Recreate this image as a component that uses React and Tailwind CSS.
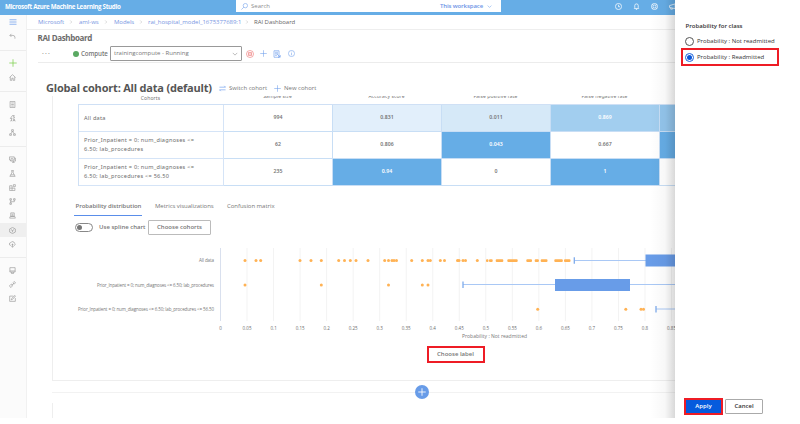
import React from 'react';

const ICONS = {
  menu: <path d="M1 3.5h14M1 8h14M1 12.5h14" />,
  undo: <path d="M5.5 2L2 5.500l3.500 3.500M2 5.500h7a4.500 4.500 0 0 1 4.500 4.500v3" />,
  plus: <path d="M8 .5v15M.5 8h15" />,
  home: <path d="M1 8l7-6.500L15 8M3 7v7.500h3.500v-5h3v5H13V7" />,
  list: <path d="M2.500 1h11v14h-11zM5 4.500h6M5 8h6M5 11.500h6" />,
  automl: <path d="M8 1L3 8h4l-3 6 3-2M8 1h4l-2 4h3l-3 3M9 14.500l2.500-6 2.500 6M10 12.500h3" />,
  designer: <path d="M6 1.500h4v4H6zM8 5.500L4 11M8 5.500l4 5.500M1.500 11h4v3.500h-4zM10.500 11h4v3.500h-4z" />,
  data: <path d="M1 2h11v7H1zM3.500 9v2.500H15V5h-3M10 11.500v3M4 5.500h5M7 14.500h6" />,
  flask: <path d="M5 1.500h6M6.500 1.500v5L2 14.500h12L9.500 6.500v-5M4 11h8" />,
  blocks: <path d="M1.500 4h5.500v11H1.500zM7 9.500h6.500V15H7M1.500 9.500H7M10 1.500h4.500V6H10z" />,
  branch: <path d="M2 1.500h3.500V5H2zM10.500 1.500H14V5h-3.500zM2 11h3.500v3.500H2zM3.800 5v6M12.200 5v3.500H3.800" />,
  env: <path d="M4 2h8v8H4zM1.500 14h13l-1.500-4H3zM6 5h4M6 7.500h4" />,
  box: <path d="M8 1l6.500 3.500v7L8 15l-6.500-3.500v-7zM4.500 6L8 8l3.500-2M8 8v4" />,
  cloud: <path d="M5 10H3.500a3 3 0 0 1 .5-6 4.500 4.500 0 0 1 8.500 1 2.700 2.700 0 0 1 0 5H11M8 6v8M5.500 12L8 14.500l2.500-2.500M6 8h4" />,
  monitor: <path d="M2 1.500h12v10H2zM5 14.500h6M6 11.500v3M10 11.500v3M2 9h12" />,
  link: <path d="M6 10l6-6M9 4l3-3 3 3-3 3-2.500-.5M7 7L4 8l-3 3 3 4 3-3 1-3" />,
  edit: <path d="M14.500 7v7.500h-13v-12H10M5 11l1-3 7.500-7 1.500 1.500L8 10z" />,
  swap: <path d="M1 5h14l-3-3M15 11H1l3 3" />,
  clock: <path d="M8 1a7 7 0 1 1 0 14A7 7 0 0 1 8 1zM8 4v4.500h3.500" />,
  bell: <path d="M3 12.500h10l-1-2V6a4 4 0 0 0-8 0v4.500zM6.500 15h3" />,
  gear: <path d="M8 1a7 7 0 1 1 0 14A7 7 0 0 1 8 1zM8 4.500a3.500 3.500 0 1 1 0 7 3.500 3.500 0 0 1 0-7zM3 3l2 2M13 3l-2 2M3 13l2-2M13 13l-2-2" />,
  horn: <path d="M1 6l13-4v11L1 10zM4 11v3h4v-2" />,
  search: <path d="M10 1a5 5 0 1 1 0 10 5 5 0 0 1 0-10zM6.500 9.500L1 15" />,
  down: <path d="M2 5l6 6 6-6" />,
  right: <path d="M5 2l6 6-6 6" />,
  stop: <path d="M8 1a7 7 0 1 1 0 14A7 7 0 0 1 8 1zM5 5h6v6H5zM5 8h6" />,
  script: <path d="M2 1.500h10v13H2zM4 4.500h6M4 7.500h6M4 10.500h4M8 8l6 6M14.500 10v4.500H10" />,
  info: <path d="M8 1a7 7 0 1 1 0 14A7 7 0 0 1 8 1zM8 7v5M8 4v1.500" />,
};

function Icon({ name, size = 7, stroke = 1.7, className = '' }) {
  return (
    <svg
      width={size}
      height={size}
      viewBox="0 0 16 16"
      fill="none"
      stroke="currentColor"
      strokeWidth={stroke}
      className={'shrink-0 ' + className}
    >
      {ICONS[name]}
    </svg>
  );
}

function NavItem({ name, color = 'text-[#999999]', active = false, size = 7 }) {
  return (
    <div className={'flex h-[14.200px] w-full shrink-0 items-center pl-[8.500px] ' + color + (active ? ' bg-[#efefef]' : '')}>
      <Icon name={name} size={size} stroke={1.500} />
    </div>
  );
}

function Sidebar() {
  return (
    <nav className="flex w-[27px] shrink-0 flex-col border-r border-[#f1f1f1] bg-[#fbfbfb]">
      <div className="h-[36px] border-b border-[#ececec]">
        <NavItem name="menu" color="text-[#6f9fec]" size={8} />
        <NavItem name="undo" />
      </div>
      <div className="h-[41px] border-b border-[#ececec] pt-[5px]">
        <NavItem name="plus" color="text-[#7fd04f]" size={8} />
        <NavItem name="home" />
      </div>
      <div className="h-[55px] border-b border-[#ececec] pt-[5px]">
        <NavItem name="list" />
        <NavItem name="automl" />
        <NavItem name="designer" />
      </div>
      <div className="h-[111px] border-b border-[#ececec] pt-[5px]">
        <NavItem name="data" />
        <NavItem name="flask" />
        <NavItem name="blocks" />
        <NavItem name="branch" />
        <NavItem name="env" />
        <NavItem name="box" active />
        <NavItem name="cloud" />
      </div>
      <div className="pt-[5px]">
        <NavItem name="monitor" />
        <NavItem name="link" />
        <NavItem name="edit" />
      </div>
    </nav>
  );
}

function Header() {
  return (
    <header className="flex h-[15px] shrink-0 items-start bg-[#66ade6] text-white">
      <div className="w-[236px] pl-[5px] text-[6.200px] leading-[13px] font-bold tracking-[-0.300px] whitespace-nowrap">
        Microsoft Azure Machine Learning Studio
      </div>
      <div className="flex h-[12px] w-[265px] items-center bg-white text-[6px]">
        <Icon name="search" className="ml-[5px] text-[#6f9fec]" stroke={1.300} />
        <span className="ml-[3px] text-[#8c8c8c]">Search</span>
        <span className="ml-auto font-semibold tracking-[-0.100px] text-[#6c93e6]">This workspace</span>
        <Icon name="down" size={5} className="mr-[9px] ml-[4px] text-[#6f9fec]" />
      </div>
      <div className="ml-[114px] flex h-[12px] items-center gap-[11px]">
        <Icon name="clock" />
        <Icon name="bell" />
        <Icon name="gear" />
        <Icon name="horn" />
      </div>
    </header>
  );
}

function Breadcrumb() {
  return (
    <div className="flex h-[15px] items-center border-b border-[#eeeeee] pl-[11px] text-[6px] tracking-[-0.040px] whitespace-nowrap text-[#7896e2]">
      <span className="w-[31px]">Microsoft</span>
      <Icon name="right" size={4} className="text-[#aaaaaa]" />
      <span className="ml-[6px] w-[25px]">aml-ws</span>
      <Icon name="right" size={4} className="text-[#aaaaaa]" />
      <span className="ml-[6px] w-[25px]">Models</span>
      <Icon name="right" size={4} className="text-[#aaaaaa]" />
      <span className="ml-[5px] w-[97px]">rai_hospital_model_1675377689:1</span>
      <Icon name="right" size={4} className="text-[#aaaaaa]" />
      <span className="ml-[5px] text-[#666666]">RAI Dashboard</span>
    </div>
  );
}

const ROWS = [
  {
    label: ['All data'],
    cells: [
      ['994', 'bg-white'],
      ['0.831', 'bg-[#e2effb]'],
      ['0.011', 'bg-[#d6e9f8]'],
      ['0.869', 'bg-[#a2ceef] text-white'],
      ['', 'bg-[#93c5ec]'],
    ],
  },
  {
    label: ['Prior_Inpatient = 0; num_diagnoses <=', '6.50; lab_procedures'],
    cells: [
      ['62', 'bg-white'],
      ['0.806', 'bg-white'],
      ['0.043', 'bg-[#66ade6] text-white'],
      ['0.667', 'bg-white'],
      ['', 'bg-[#66ade6]'],
    ],
  },
  {
    label: ['Prior_Inpatient = 0; num_diagnoses <=', '6.50; lab_procedures <= 56.50'],
    cells: [
      ['235', 'bg-white'],
      ['0.94', 'bg-[#66ade6] text-white'],
      ['0', 'bg-white'],
      ['1', 'bg-[#66ade6] text-white'],
      ['', 'bg-white'],
    ],
  },
];

function MetricsTable() {
  return (
    <div className="ml-[25px] w-[691px] font-['Noto_Sans',sans-serif]">
      <div className="grid h-[8px] grid-cols-[145px_109px_109px_109px_109px_109px] text-center text-[5px] leading-[6px] tracking-[0.100px] text-[#777777]">
        <span className="-mt-[1px]">Cohorts</span>
        <span className="-mt-[3px]">Sample size</span>
        <span className="-mt-[3px]">Accuracy score</span>
        <span className="-mt-[3px]">False positive rate</span>
        <span className="-mt-[3px]">False negative rate</span>
      </div>
      <div className="border-t border-l border-[#cfe0f5]">
        {ROWS.map((row, i) => (
          <div key={i} className="grid h-[27px] grid-cols-[145px_109px_109px_109px_109px_109px]">
            <div className="flex flex-col justify-center border-r border-b border-[#d5e4f7] pl-[5px] text-[5.600px] leading-[9px] tracking-[0.250px] whitespace-nowrap text-[#6c6c6c]">
              {row.label.map((line) => (
                <span key={line}>{line}</span>
              ))}
            </div>
            {row.cells.map(([value, tone], j) => (
              <div
                key={j}
                className={
                  'flex items-center justify-center border-r border-b border-[#c8def5] text-[5.200px] font-semibold ' +
                  tone +
                  (tone.includes('text-white') ? '' : ' text-[#777777]')
                }
              >
                {value}
              </div>
            ))}
          </div>
        ))}
      </div>
    </div>
  );
}

const OUTLIERS = [
  [
    260.500,
    [
      245, 256, 260.700, 300, 311, 321.300, 338.700, 344.500, 350.300, 356, 368, 384.700, 388.500, 392, 394, 396.500,
      411.700, 422.300, 428, 430.300, 440.300, 444.500, 457.500, 459, 463, 465.500, 477.300,
    ],
  ],
  [285, [245, 321.300, 388.500, 422.300, 428]],
  [309.300, [537.700, 625.800, 641, 643.500]],
];

const CLUSTERS = [
  [486, 488.500], [489, 492.700], [495.700, 503.300], [507.300, 517.700],
  [526.300, 532], [534.700, 538.900], [540.700, 547.500], [554.300, 562.800], [564, 570.500],
];

const TICKS = Array.from({ length: 18 }, (_, i) => i);

function BoxPlot() {
  return (
    <svg width="622" height="100" viewBox="53 242 622 100" className="block overflow-visible font-['Open_Sans',sans-serif]">
      {TICKS.map((i) => (
        <g key={i}>
          <path d={`M${220.500 + i * 26.530} 248V321`} stroke={i ? '#f3f3f3' : '#d9e0ee'} />
          <text x={220.500 + i * 26.530} y="329.500" fontSize="4.500" textAnchor="middle" fill="#6c6c6c">
            {Number((i * 0.05).toFixed(2))}
          </text>
        </g>
      ))}
      <g fontSize="4.500" textAnchor="end" fill="#777777">
        <text x="214" y="262.300" textLength="15">All data</text>
        <text x="214" y="286.500" textLength="117">Prior_Inpatient = 0; num_diagnoses &lt;= 6.50; lab_procedures</text>
        <text x="214" y="310.800" textLength="136">Prior_Inpatient = 0; num_diagnoses &lt;= 6.50; lab_procedures &lt;= 56.50</text>
      </g>
      <text x="494.500" y="338.300" fontSize="5" textAnchor="middle" textLength="65" fill="#777777">Probability : Not readmitted</text>
      <g stroke="#a9c8f5" fill="none">
        <path d="M574.300 260.500H675M463 284.500H675M656 309H675" />
        <path d="M574.300 257.300v6.500M463 281.500v6.500M656 306v6.500" stroke="#7eabec" strokeWidth="1.300" />
      </g>
      <path d="M645.500 254.500H675v12H645.500zM555 279h75v12h-75z" fill="#689ce8" />
      <g fill="#ffb254">
        {OUTLIERS.map(([y, xs]) => xs.map((x, i) => <circle key={y + '-' + i} cx={x} cy={y} r="1.500" />))}
        {CLUSTERS.map(([a, b]) => (
          <rect key={a} x={a} y="259.200" width={b - a} height="2.700" rx="1" />
        ))}
      </g>
    </svg>
  );
}

function SidePanel() {
  return (
    <aside className="absolute inset-y-0 right-0 flex w-[125px] flex-col bg-white text-[6px] text-[#333333]">
      <div className="mt-[21px] ml-[10.500px] h-[10px] text-[6px] leading-[10px] font-semibold">Probability for class</div>
      <label className="mt-[5px] ml-[10px] flex h-[11px] items-center gap-[3px]">
        <span className="size-[9px] rounded-full border border-[#555555]" />
        <span className="whitespace-nowrap">Probability : Not readmitted</span>
      </label>
      <label className="mt-px ml-[6px] flex h-[18px] w-[98px] items-center gap-[3px] border-2 border-[#ee1c25] pl-[2px]">
        <span className="flex size-[9px] items-center justify-center rounded-full border border-[#1a62dc]">
          <span className="size-[5px] rounded-full bg-[#0b57d8]" />
        </span>
        <span className="whitespace-nowrap">Probability : Readmitted</span>
      </label>
      <div className="mt-auto mb-[9px] ml-[9px] flex h-[17px] items-center gap-[2px] font-semibold">
        <button className="h-[17px] w-[39px] border-2 border-[#ee1c25] bg-[#055bdd] text-white">Apply</button>
        <button className="h-[15px] w-[38px] rounded-[1px] border border-[#aaaaaa]">Cancel</button>
      </div>
    </aside>
  );
}

export default function App() {
  return (
    <div className="relative h-[424px] w-[800px] overflow-hidden bg-white font-['Open_Sans','Noto_Sans',sans-serif] text-[6px]">
      <div className="flex h-[418px] w-[800px] flex-col overflow-hidden">
        <Header />
        <div className="flex min-h-0 flex-1">
          <Sidebar />
          <main className="flex min-w-0 flex-1 flex-col">
            <Breadcrumb />
            <div className="h-[15px] pt-[2px] pl-[10.500px] text-[8px] leading-[12px] font-bold tracking-[-0.350px] text-[#6c6c6c]">
              RAI Dashboard
            </div>
            <div className="mx-[11px] flex h-[18px] items-center border-b border-[#ececec] text-[#777777]">
              <span className="w-[35px] pb-[3px] pl-[4px] text-[7px] tracking-[1.200px]">...</span>
              <span className="size-[6px] rounded-full bg-[#5aa962]" />
              <span className="ml-[2px] w-[29px] text-[6.200px] font-semibold tracking-[-0.100px]">Compute</span>
              <span className="flex h-[15px] w-[132px] items-center justify-between rounded-[1px] border border-[#999999] px-[3px]">
                trainingcompute - Running
                <Icon name="down" size={6} stroke={1.300} />
              </span>
              <Icon name="stop" size={8} stroke={1.300} className="ml-[4px] text-[#ee7c7c]" />
              <Icon name="plus" stroke={1.300} className="ml-[6px] text-[#6f9fec]" />
              <Icon name="script" size={8} stroke={1.300} className="ml-[6px] text-[#6f9fec]" />
              <Icon name="info" stroke={1.300} className="ml-[7px] text-[#6f9fec]" />
            </div>
            <div className="flex h-[33px] items-end pb-px pl-[19px] text-[#777777]">
              <h1 className="w-[173px] text-[11px] leading-[14px] font-bold tracking-[-0.200px] whitespace-nowrap text-[#555555]">
                Global cohort: All data (default)
              </h1>
              <div className="flex h-[13px] items-center whitespace-nowrap">
                <Icon name="swap" stroke={1.500} className="text-[#6f9fec]" />
                <span className="ml-[3px] w-[45px]">Switch cohort</span>
                <Icon name="plus" stroke={1.300} className="text-[#6f9fec]" />
                <span className="ml-[3px]">New cohort</span>
              </div>
            </div>
            <div className="flex min-h-0 flex-1 flex-col overflow-hidden pl-[25px]">
              <section className="h-[285px] shrink-0 overflow-hidden border-b border-l border-[#eeeeee]">
                <MetricsTable />
                <div className="mt-[13px] ml-[21px] flex h-[17px] leading-[15px] whitespace-nowrap text-[#777777]">
                  <div className="h-[17px] w-[68px] border-b border-[#5a8eea] pl-[1.500px] font-semibold tracking-[-0.050px]">Probability distribution</div>
                  <div className="ml-[13px] w-[72px] tracking-[-0.040px]">Metrics visualizations</div>
                  <div className="tracking-[-0.040px]">Confusion matrix</div>
                </div>
                <div className="mt-[4px] ml-[22px] flex h-[15px] items-center font-semibold text-[#777777]">
                  <span className="flex h-[9px] w-[18px] items-center rounded-full border border-[#888888] pl-[1px]">
                    <span className="size-[5px] rounded-full bg-[#777777]" />
                  </span>
                  <span className="ml-[6px] w-[49px] whitespace-nowrap">Use spline chart</span>
                  <button className="h-[15px] w-[63px] rounded-[1px] border border-[#bbbbbb]">Choose cohorts</button>
                </div>
                <div className="mt-[7px]">
                  <BoxPlot />
                </div>
                <button className="mt-[4px] ml-[373.500px] block h-[17px] w-[58px] border-2 border-[#ee1c25] font-semibold text-[#777777]">
                  Choose label
                </button>
              </section>
              <div className="flex h-[22px] shrink-0 items-center">
                <span className="h-px w-[363px] bg-[#f2f2f2]" />
                <span className="flex size-[14px] items-center justify-center rounded-full bg-[#689ce8] text-white">
                  <Icon name="plus" size={8} stroke={1.700} />
                </span>
                <span className="h-px flex-1 bg-[#f2f2f2]" />
              </div>
              <section className="h-[40px] shrink-0 border-l border-[#eeeeee] pt-[13px] pl-[68px] leading-[10px] font-semibold text-[#777777]">
                Cohorts
              </section>
            </div>
          </main>
        </div>
      </div>
      <div className="absolute top-0 left-[650px] h-[418px] w-[25px] bg-linear-to-r from-transparent via-black/3 via-60% to-black/15" />
      <SidePanel />
    </div>
  );
}
